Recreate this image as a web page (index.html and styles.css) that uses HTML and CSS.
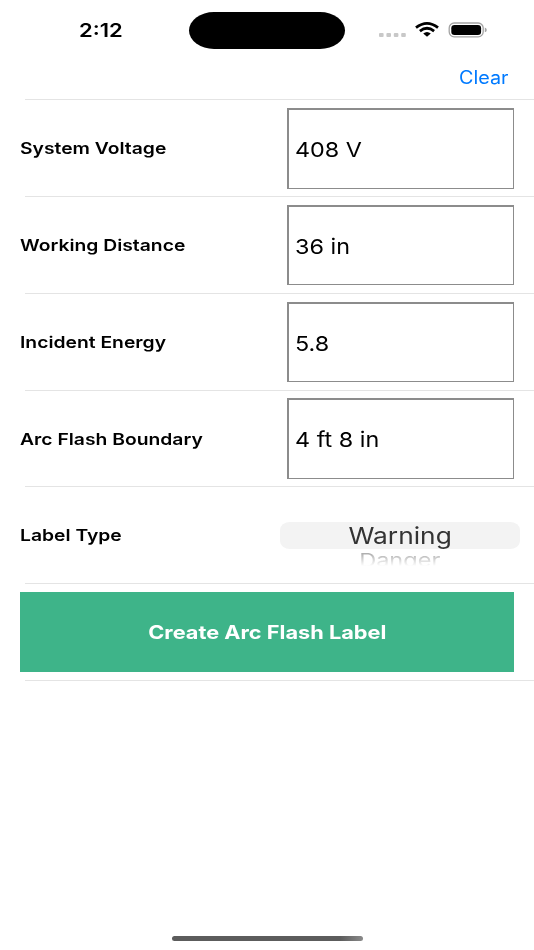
FILE: index.html
```
<!DOCTYPE html>
<html lang="en">

<head>
    <meta charset="UTF-8">
    <meta name="viewport" content="width=device-width, initial-scale=1.0">
    <title>Arc Flash Label</title>
    <link rel="stylesheet" href="styles.css">
</head>

<body>
    <!-- Status bar -->
    <header class="status-bar">
        <div class="time"><span class="wide">2:12</span></div>
        <div class="island"></div>
        <div class="status-icons">
            <svg width="28" height="20" viewBox="0 0 28 20" fill="#c8c8c8">
                <rect x="0" y="13" width="4.6" height="4" rx="1"/>
                <rect x="7.4" y="13" width="4.6" height="4" rx="1"/>
                <rect x="14.8" y="13" width="4.6" height="4" rx="1"/>
                <rect x="22.2" y="13" width="4.6" height="4" rx="1"/>
            </svg>
            <svg class="wifi" width="24" height="20" viewBox="0 0 24 20">
                <path d="M1 7.6Q12 -.8 23 7.6" fill="none" stroke="#000" stroke-width="2.8"/>
                <path d="M4.9 11.1Q12 5.5 19.1 11.1" fill="none" stroke="#000" stroke-width="2.8"/>
                <path d="M8.2 13.6Q12 10.6 15.8 13.6L12 16.8Z"/>
            </svg>
            <svg class="battery" width="40" height="20" viewBox="0 0 40 20">
                <rect x="1.2" y="3" width="34" height="13.8" rx="5" fill="none" stroke="#a3a3a3" stroke-width="1.3"/>
                <rect x="3.3" y="5" width="29.8" height="9.9" rx="3.2"/>
                <path d="M36.8 7.5Q38.8 8.2 38.8 9.9T36.8 12.3Z" fill="#a3a3a3"/>
            </svg>
        </div>
    </header>

    <nav class="toolbar">
        <a class="clear"><span class="wide">Clear</span></a>
    </nav>

    <!-- Form -->
    <main class="form">
        <div class="row">
            <div class="label"><span class="wide">System Voltage</span></div>
            <div class="field"><span class="wide">408 V</span></div>
        </div>
        <div class="row">
            <div class="label"><span class="wide">Working Distance</span></div>
            <div class="field"><span class="wide">36 in</span></div>
        </div>
        <div class="row">
            <div class="label"><span class="wide">Incident Energy</span></div>
            <div class="field"><span class="wide">5.8</span></div>
        </div>
        <div class="row">
            <div class="label"><span class="wide">Arc Flash Boundary</span></div>
            <div class="field"><span class="wide">4 ft 8 in</span></div>
        </div>
        <div class="row">
            <div class="label"><span class="wide">Label Type</span></div>
            <div class="picker">
                <div class="selected"><span class="wide">Warning</span></div>
                <div class="next"><span class="wide">Danger</span></div>
            </div>
        </div>
        <div class="row">
            <div class="create"><span class="wide">Create Arc Flash Label</span></div>
        </div>
        <div class="end-line"></div>
    </main>

    <div class="home-indicator"></div>
</body>

</html>
```

FILE: styles.css
```
body {
    font-family: Inter, "Liberation Sans", sans-serif;
    background-color: #fff;
    color: #000;
    display: flex;
    flex-direction: column;
    height: 950px;
    margin: 0;
    overflow: hidden;
}

/* text is drawn wider than its natural width */
.wide {
    display: inline-block;
    white-space: nowrap;
    transform: scaleX(1.15);
    transform-origin: left center;
}

.status-bar {
    display: flex;
    height: 49px;
    padding-top: 12px;
    box-sizing: border-box;
}

.time {
    width: 110px;
    padding-left: 79px;
    font-size: 18.5px;
    font-weight: 600;
    line-height: 37px;
}

.time .wide {
    transform: scaleX(1.19);
}

.island {
    width: 156px;
    height: 37px;
    background-color: #000;
    border-radius: 25px / 18.5px;
}

.status-icons {
    display: flex;
    padding: 8px 0 0 34px;
}

.wifi {
    margin-left: 8px;
}

.battery {
    margin-left: 9px;
}

.toolbar {
    height: 50.4px;
    display: flex;
    padding-left: 459px;
}

.clear {
    color: #007aff;
    font-size: 18px;
    line-height: 57px;
}

.clear .wide {
    transform: scaleX(1.1);
}

.row {
    display: flex;
    align-items: center;
    box-sizing: border-box;
    height: 96.75px;
    padding: 1px 20px 0 20px;
    background: linear-gradient(#e4e4e4, #e4e4e4) 25px 0 / 100% 1px no-repeat;
}

.end-line {
    height: 1px;
    margin-left: 25px;
    background-color: #e4e4e4;
}

.label {
    flex: none;
    width: 267px;
    font-size: 16.5px;
    font-weight: 600;
}

.label .wide {
    transform: scaleX(1.17);
}

.field {
    width: 227px;
    height: 80.5px;
    box-sizing: border-box;
    border: 1px solid #8c8c8c;
    border-top: 2px solid #8c8c8c;
    border-left: 2px solid #8c8c8c;
    padding: 2px 0 0 6px;
    font-size: 20.5px;
    line-height: 76px;
}

.field .wide {
    transform: scaleX(1.14);
}

.picker {
    flex: none;
    width: 240px;
    height: 80px;
    margin-left: -7px;
    text-align: center;
}

.picker .wide,
.create .wide {
    transform-origin: center;
}

.selected {
    height: 27px;
    margin-top: 27px;
    border-radius: 10px / 8px;
    background-color: #f3f3f3;
    color: #333;
    font-size: 23.5px;
    line-height: 28px;
}

.selected .wide {
    transform: scaleX(1.12);
}

/* the next option fades out below the selected one */
.next {
    height: 24px;
    color: #777;
    font-size: 19px;
    line-height: 24px;
    -webkit-mask-image: linear-gradient(rgba(0, 0, 0, 0.8), transparent 17px);
    mask-image: linear-gradient(rgba(0, 0, 0, 0.8), transparent 17px);
}

.next .wide {
    transform: scaleX(1.24);
}

.create {
    width: 494px;
    height: 80px;
    background-color: #3eb489;
    color: #fff;
    font-size: 18.5px;
    font-weight: 700;
    line-height: 80px;
    text-align: center;
}

.create .wide {
    transform: scaleX(1.175);
}

.home-indicator {
    width: 191px;
    height: 5px;
    margin: auto auto 9px 171.5px;
    border-radius: 3px;
    background: linear-gradient(90deg, #5c5c5c 88%, #8a8a8a);
}
```
